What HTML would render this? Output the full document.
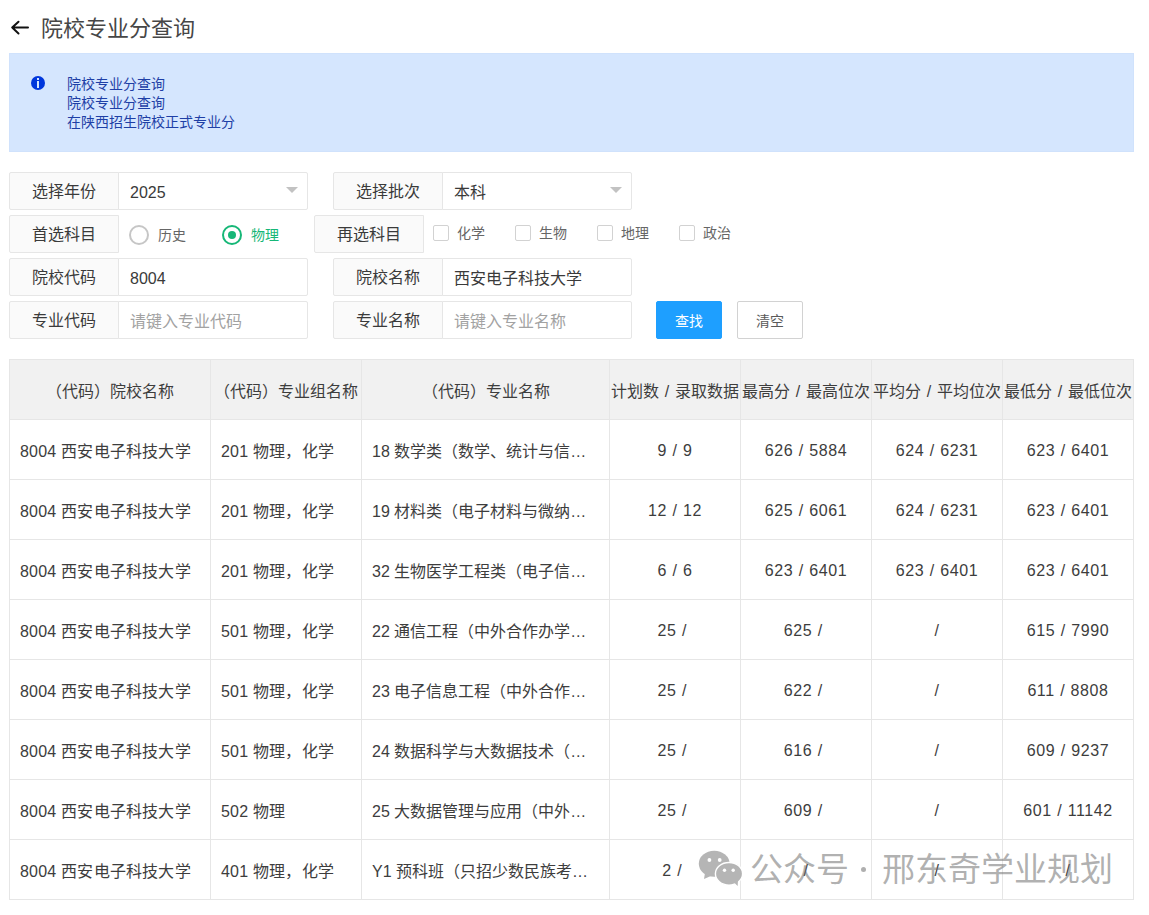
<!DOCTYPE html>
<html lang="zh-CN"><head><meta charset="utf-8">
<style>
*{box-sizing:border-box;margin:0;padding:0}
html,body{width:1149px;height:915px;overflow:hidden;background:#fff}
body{font-family:"Liberation Sans",sans-serif;color:#333;position:relative}
.abs{position:absolute}
.title{left:41px;top:13px;font-size:22px;line-height:32px;color:#464646;white-space:nowrap}
.arrow{left:10px;top:20px;width:20px;height:16px}
.alert{left:9px;top:53px;width:1125px;height:99px;background:#d5e6fe;border:1px solid #d0e2fc}
.alert .ic{position:absolute;left:21px;top:22px;width:14px;height:14px;border-radius:50%;background:#0037dc}
.alert .ic:before{content:"";position:absolute;left:6px;top:2px;width:2px;height:2px;background:#d5e6fd}
.alert .ic:after{content:"";position:absolute;left:6px;top:5px;width:2px;height:7px;background:#d5e6fd}
.alert .txt{position:absolute;left:57px;top:21px;font-size:14px;line-height:19px;color:#1e3fa6;white-space:nowrap}
.lab{height:38px;width:110px;background:#fafafa;border:1px solid #e6e6e6;border-radius:2px 0 0 2px;text-align:center;font-size:16px;line-height:36px;padding-top:1px;color:#3a3a3a;white-space:nowrap}
.inp{height:38px;width:190px;background:#fff;border:1px solid #e6e6e6;border-radius:0 2px 2px 0;font-size:16px;line-height:36px;padding-top:2px;color:#3a3a3a;padding-left:11px;white-space:nowrap}
.ph{color:#a2a2a2}
.tri{position:absolute;right:9px;top:14px;width:0;height:0;border-left:6px solid transparent;border-right:6px solid transparent;border-top:6px solid #c2c2c2}
.radio{width:20px;height:20px;border-radius:50%;border:2px solid #c6c6c6}
.radio.on{border-color:#16b777}
.radio.on:after{content:"";position:absolute;left:4px;top:4px;width:8px;height:8px;border-radius:50%;background:#16b777}
.rtxt{font-size:14px;line-height:20px;color:#666;white-space:nowrap}
.cb{width:16px;height:16px;border:1px solid #d2d2d2;border-radius:2px;background:#fff}
.btn{height:38px;font-size:14px;line-height:36px;padding-top:1px;text-align:center;border-radius:2px;white-space:nowrap}
.btn1{background:#1e9fff;color:#fff;border:1px solid #1e9fff}
.btn2{background:#fff;color:#5a5a5a;border:1px solid #d2d2d2}
table{position:absolute;left:9px;top:359px;width:1125px;border-collapse:collapse;table-layout:fixed;font-size:16px;color:#3d3d3d}
td,th{border:1px solid #e6e6e6;height:60px;padding:0 10px;white-space:nowrap;overflow:hidden;text-overflow:ellipsis;font-weight:normal}
th{background:#f1f1f1;text-align:center;padding:0;word-spacing:1px}
td:nth-child(1),td:nth-child(2){letter-spacing:.22px}
td.c{text-align:center;letter-spacing:.6px;word-spacing:.4px;padding-top:2px}
.wmdot{left:861px;top:867px;width:5px;height:5px;border-radius:50%;background:rgba(110,110,110,.55)}
.wm{top:850px;font-size:33px;line-height:40px;color:rgba(110,110,110,.55);white-space:nowrap}
</style></head><body>
<svg class="abs arrow" viewBox="0 0 20 16"><path d="M8.5 1.7 L2.2 7.6 L8.5 13.5 M2.2 7.6 H18" fill="none" stroke="#111" stroke-width="2" stroke-linecap="round" stroke-linejoin="round"/></svg>
<div class="abs title">院校专业分查询</div>
<div class="abs alert"><div class="ic"></div><div class="txt">院校专业分查询<br>院校专业分查询<br>在陕西招生院校正式专业分</div></div>

<!-- row 1 -->
<div class="abs lab" style="left:9px;top:172px">选择年份</div>
<div class="abs inp" style="left:118px;top:172px">2025<span class="tri"></span></div>
<div class="abs lab" style="left:333px;top:172px">选择批次</div>
<div class="abs inp" style="left:442px;top:172px">本科<span class="tri"></span></div>
<!-- row 2 -->
<div class="abs lab" style="left:9px;top:215px">首选科目</div>
<div class="abs radio" style="left:129px;top:225px"></div>
<div class="abs rtxt" style="left:158px;top:225px">历史</div>
<div class="abs radio on" style="left:222px;top:225px"></div>
<div class="abs rtxt" style="left:251px;top:225px;color:#16b777">物理</div>
<div class="abs lab" style="left:314px;top:215px">再选科目</div>
<div class="abs cb" style="left:433px;top:225px"></div>
<div class="abs rtxt" style="left:457px;top:223px">化学</div>
<div class="abs cb" style="left:515px;top:225px"></div>
<div class="abs rtxt" style="left:539px;top:223px">生物</div>
<div class="abs cb" style="left:597px;top:225px"></div>
<div class="abs rtxt" style="left:621px;top:223px">地理</div>
<div class="abs cb" style="left:679px;top:225px"></div>
<div class="abs rtxt" style="left:703px;top:223px">政治</div>
<!-- row 3 -->
<div class="abs lab" style="left:9px;top:258px">院校代码</div>
<div class="abs inp" style="left:118px;top:258px">8004</div>
<div class="abs lab" style="left:333px;top:258px">院校名称</div>
<div class="abs inp" style="left:442px;top:258px">西安电子科技大学</div>
<!-- row 4 -->
<div class="abs lab" style="left:9px;top:301px">专业代码</div>
<div class="abs inp ph" style="left:118px;top:301px">请键入专业代码</div>
<div class="abs lab" style="left:333px;top:301px">专业名称</div>
<div class="abs inp ph" style="left:442px;top:301px">请键入专业名称</div>
<div class="abs btn btn1" style="left:656px;top:301px;width:66px">查找</div>
<div class="abs btn btn2" style="left:737px;top:301px;width:66px">清空</div>

<table>
<colgroup><col style="width:201px"><col style="width:151px"><col style="width:248px"><col style="width:131px"><col style="width:131px"><col style="width:131px"><col style="width:131px"></colgroup>
<thead><tr><th>（代码）院校名称</th><th>（代码）专业组名称</th><th>（代码）专业名称</th><th>计划数 / 录取数据</th><th>最高分 / 最高位次</th><th>平均分 / 平均位次</th><th>最低分 / 最低位次</th></tr></thead>
<tbody>
<tr><td>8004 西安电子科技大学</td><td>201 物理，化学</td><td>18 数学类（数学、统计与信息与计算科学）</td><td class="c">9 / 9</td><td class="c">626 / 5884</td><td class="c">624 / 6231</td><td class="c">623 / 6401</td></tr>
<tr><td>8004 西安电子科技大学</td><td>201 物理，化学</td><td>19 材料类（电子材料与微纳电子学）</td><td class="c">12 / 12</td><td class="c">625 / 6061</td><td class="c">624 / 6231</td><td class="c">623 / 6401</td></tr>
<tr><td>8004 西安电子科技大学</td><td>201 物理，化学</td><td>32 生物医学工程类（电子信息）</td><td class="c">6 / 6</td><td class="c">623 / 6401</td><td class="c">623 / 6401</td><td class="c">623 / 6401</td></tr>
<tr><td>8004 西安电子科技大学</td><td>501 物理，化学</td><td>22 通信工程（中外合作办学）（学费标准另行公布）</td><td class="c">25 /&nbsp;</td><td class="c">625 /&nbsp;</td><td class="c">&nbsp;/&nbsp;</td><td class="c">615 / 7990</td></tr>
<tr><td>8004 西安电子科技大学</td><td>501 物理，化学</td><td>23 电子信息工程（中外合作办学）</td><td class="c">25 /&nbsp;</td><td class="c">622 /&nbsp;</td><td class="c">&nbsp;/&nbsp;</td><td class="c">611 / 8808</td></tr>
<tr><td>8004 西安电子科技大学</td><td>501 物理，化学</td><td>24 数据科学与大数据技术（中外合作办学）</td><td class="c">25 /&nbsp;</td><td class="c">616 /&nbsp;</td><td class="c">&nbsp;/&nbsp;</td><td class="c">609 / 9237</td></tr>
<tr><td>8004 西安电子科技大学</td><td>502 物理</td><td>25 大数据管理与应用（中外合作办学）</td><td class="c">25 /&nbsp;</td><td class="c">609 /&nbsp;</td><td class="c">&nbsp;/&nbsp;</td><td class="c">601 / 11142</td></tr>
<tr><td>8004 西安电子科技大学</td><td>401 物理，化学</td><td>Y1 预科班（只招少数民族考生）</td><td class="c">2 /&nbsp;</td><td class="c">&nbsp;/&nbsp;</td><td class="c">&nbsp;/&nbsp;</td><td class="c">&nbsp;/&nbsp;</td></tr>
</tbody></table>

<svg class="abs" style="left:697px;top:849px;opacity:.93" width="48" height="40" viewBox="0 0 48 40">
<ellipse cx="17.2" cy="14.8" rx="15.4" ry="13" fill="#b0b0b0"/>
<path d="M8 24 L7 30 L15 26.5 Z" fill="#b0b0b0"/>
<ellipse cx="32" cy="24.8" rx="13.6" ry="11.3" fill="#b0b0b0" stroke="#fff" stroke-width="1.4"/>
<path d="M36.5 33 L40.7 37 L41 30 Z" fill="#b0b0b0"/>
<circle cx="12.4" cy="11" r="1.9" fill="#fff"/><circle cx="22.7" cy="11" r="1.9" fill="#fff"/>
<circle cx="27.5" cy="21.3" r="1.7" fill="#fff"/><circle cx="36.2" cy="21.3" r="1.7" fill="#fff"/>
</svg>
<div class="abs wm" style="left:750px">公众号</div><div class="abs wmdot"></div><div class="abs wm" style="left:882px">邢东奇学业规划</div>
</body></html>
